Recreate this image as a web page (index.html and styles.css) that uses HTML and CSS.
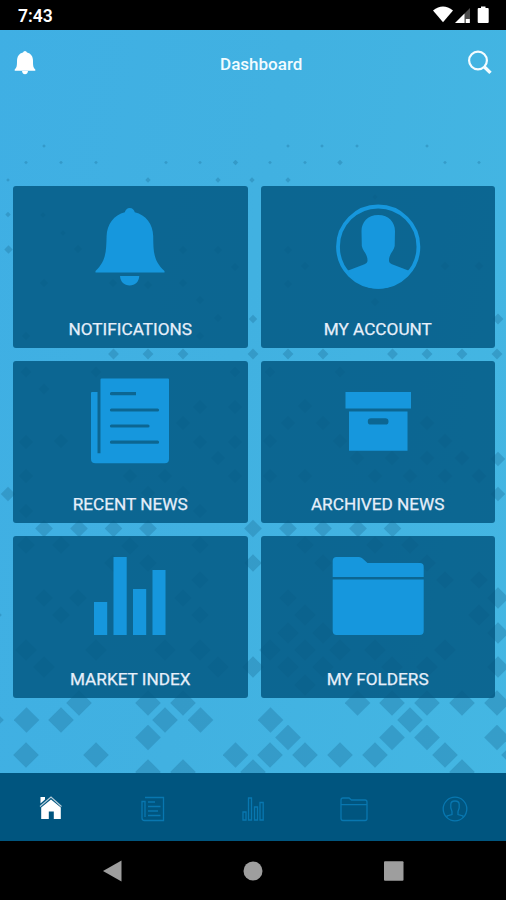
FILE: index.html
```html
<!DOCTYPE html>
<html lang="en">
<head>
<meta charset="utf-8">
<title>Dashboard</title>
<link rel="stylesheet" href="styles.css">
</head>
<body>
<div class="phone">
  <svg class="pattern" viewBox="0 0 506 900" aria-hidden="true">
    <defs>
      <marker id="d1" markerUnits="userSpaceOnUse" markerWidth="4" markerHeight="4" refX="2" refY="2"><path d="M2 .2L3.8 2 2 3.8 .2 2z"/></marker>
      <marker id="d2" markerUnits="userSpaceOnUse" markerWidth="6" markerHeight="6" refX="3" refY="3"><path d="M3 .3L5.7 3 3 5.7 .3 3z"/></marker>
      <marker id="d3" markerUnits="userSpaceOnUse" markerWidth="12" markerHeight="12" refX="6" refY="6"><path d="M6 1.8L10.2 6 6 10.2 1.8 6z"/></marker>
      <marker id="d4" markerUnits="userSpaceOnUse" markerWidth="12" markerHeight="12" refX="6" refY="6"><path d="M6 .6L11.4 6 6 11.4 .6 6z"/></marker>
      <marker id="d5" markerUnits="userSpaceOnUse" markerWidth="16" markerHeight="16" refX="8" refY="8"><path d="M8 .8L15.2 8 8 15.2 .8 8z"/></marker>
      <marker id="d6" markerUnits="userSpaceOnUse" markerWidth="20" markerHeight="20" refX="10" refY="10"><path d="M10 1.2L18.8 10 10 18.8 1.2 10z"/></marker>
      <marker id="d7" markerUnits="userSpaceOnUse" markerWidth="24" markerHeight="24" refX="12" refY="12"><path d="M12 1.2L22.8 12 12 22.8 1.2 12z"/></marker>
      <marker id="d8" markerUnits="userSpaceOnUse" markerWidth="26" markerHeight="26" refX="13" refY="13"><path d="M13 .2L25.8 13 13 25.8 .2 13z"/></marker>
    </defs>
    <polyline class="m1" points="44,146 288,146 322,146 357,146 427,146 26,162.500 61,162.500 96,162.500 166,162.500 200,162.500 270,162.500 305,162.500 445,162.500 479,162.500 8,180"/>
    <polyline class="m2" points="235.500,162.500 340,162.500 148,180 218,180 252,180 288,180 8,214.500 375,197 43,215 63,233"/>
    <polyline class="m3" points="8.500,249.500 78,249 183,250 218,250 44,283 113,283 148,285 183,283 200,300 218,318 235,267 26,336 200,336 288,250 288,284 305,266 375,302 445,266 479,266 253,319"/>
    <polyline class="m4" points="113.500,354 148,354 183,354 253,354 288,354 323,354 392.500,354 427,354 462,354 497,354 498,319 26,372 96,372 235,372 44,389 270,372 340,372"/>
    <polyline class="m5" points="8,494 200,407 235,407 183,423 200,442 235,442 218,458 26,442 61,441 26,476 130,476 165,476 235,476 148,493 183,493 26,511 200,511 305,406 288,423 323,423 427,423 340,441 270,441 445,441 357,458 392,458 427,458 462,458 270,476 305,476 375,476 410,476 445,476 479,476 498,459 498,494"/>
    <polyline class="m6" points="44,528.500 79,528.500 113.500,528.500 148,528.500 253,528.500 288,528.500 323,528.500 358,528.500 392.500,528.500 26,545 61,545 130,546 200,545 113,563 148,563 253,563 200,580 44,598 78,598 183,598 61,615 200,615 -7,615 305,545 375,545 410,545 427,563 323,563 445,580 479,580 288,598"/>
    <polyline class="m7" points="498,598 498,633 498,667 479,615 305,615 288,633 323,633 270,650 305,650 340,650 375,650 445,650 288,667 323,667 392,667 427,667 305,685 26,650 96,650 165,650 200,650 44,667 218,667 253,667"/>
    <polyline class="m8" points="-9,720 26.500,720 61,720 79,703 148,703 183,703 165,720 200.500,720 148,737.500 26,755 96,755 235.500,755 148,772 183,772 253,772 357.500,703 392,703 427,703 462,703 497,703 270.500,720 410,720 288,737.500 392,737.500 427,737.500 497,737.500 270,755 305,755 340,755 375,755 445,755 462,772 514,755"/>
  </svg>

  <header class="status">
    <span class="clock">7:43</span>
    <svg class="status-icons" width="60" height="20" viewBox="0 0 60 20">
      <path d="M0 5.500Q10-2.500 20 5.500L10 17.200z"/>
      <path d="M22 18L37 3V18z" opacity=".3"/>
      <path d="M22 18L31.500 8.500V18zM32.800 14h4v4h-4z"/>
      <path d="M48 1.500h4.500V3h2.200q1 0 1 1v13q0 1-1 1h-9q-1 0-1-1V4q0-1 1-1H48z"/>
    </svg>
  </header>

  <div class="appbar">
    <svg width="22" height="26" viewBox="0 0 22 26"><path class="white" d="M11 1q1.600 0 2 1.500C17 3.500 19 6.500 19 11c0 5 .3 6.500 2.300 8.500v1.300H.7v-1.300C2.700 17.500 3 16 3 11c0-4.500 2-7.500 6-8.500Q9.400 1 11 1zM8 21h6q-.5 3.200-3 3.200T8 21z"/></svg>
    <h1 class="title">Dashboard</h1>
    <svg width="26" height="26" viewBox="0 0 26 26"><circle cx="11" cy="10.500" r="8.900" class="lens"/><path class="handle" d="M17.200 16.700l6.300 6.200"/></svg>
  </div>

  <main class="tiles">
    <section class="tile">
      <svg class="art" viewBox="0 0 100 100"><path d="M49.800 14c2.700 0 4.200 1.700 5 4.200C66 21 73 30 73.200 42c.2 16 .3 25 11.300 35v1.500h-69V77C26 67 26.200 58 26.600 42 27 30 34 21 44.800 18.200c.8-2.500 2.300-4.200 5-4.200zM40 82h19.300c-.5 6-4.200 9.500-9.600 9.500S40.500 88 40 82z"/></svg>
      <h2 class="label">NOTIFICATIONS</h2>
    </section>
    <section class="tile">
      <svg class="art" viewBox="0 0 100 100"><circle class="ring" cx="50.200" cy="52.700" r="40.200"/><path d="M50.200 21C61 21 67 28.500 67 37l-.3 15c-.7 5-5.700 7.500-5.700 14.500 0 2 1 2.800 3 3.700l17 6.500C74.500 88 63 94.700 50.200 94.700S26 88 19.500 76.700l17-6.500c2-.9 3-1.700 3-3.700 0-7-5-9.500-5.700-14.500L33.500 37c0-8.500 6-16 16.700-16z"/></svg>
      <h2 class="label">MY ACCOUNT</h2>
    </section>
    <section class="tile">
      <svg class="art" viewBox="0 0 100 100"><path fill-rule="evenodd" d="M21.500 9.500H88q1 0 1 1V90q0 4.300-4.300 4.300H15.500Q11 94.300 11 90V24q0-1 1-1h5.500v61.300h3V10.500q0-1 1-1zM31.500 23.100a1.600 1.600 0 0 0 0 3.200H56v-3.200zM31.500 39.400a1.600 1.600 0 0 0 0 3.200H77.500a1.600 1.600 0 0 0 0-3.200zM31.500 55.400a1.600 1.600 0 0 0 0 3.200H68a1.600 1.600 0 0 0 0-3.200zM31.500 71.600a1.600 1.600 0 0 0 0 3.200H77.500a1.600 1.600 0 0 0 0-3.200z"/></svg>
      <h2 class="label">RECENT NEWS</h2>
    </section>
    <section class="tile">
      <svg class="art" viewBox="0 0 100 100"><path fill-rule="evenodd" d="M17.500 23H83v16.500H17.500zM21 42.500h58.500v39.200H21zM43 49.200a3.200 3.200 0 0 0 0 6.400h14.300a3.200 3.200 0 0 0 0-6.400z"/></svg>
      <h2 class="label">ARCHIVED NEWS</h2>
    </section>
    <section class="tile">
      <svg class="art" viewBox="0 0 100 100"><path d="M14 58h13.200v33H14zM33.500 13h13.200v78H33.500zM53 45h13.200v46H53zM72.500 26h13v65h-13z"/></svg>
      <h2 class="label">MARKET INDEX</h2>
    </section>
    <section class="tile">
      <svg class="art" viewBox="0 0 100 100"><path d="M8.500 13H31q2 0 3.500 1.500l5 4.500H92q3.700 0 3.700 3.700V33h-91V17Q4.700 13 8.500 13zM4.700 35.500h91V87q0 4-4 4H8.700q-4 0-4-4z"/></svg>
      <h2 class="label">MY FOLDERS</h2>
    </section>
  </main>

  <nav class="tabs">
    <svg viewBox="0 0 30 30"><path class="white" d="M4.500 4H9v2.500l-4.500 4zM15 6.500l9.800 8V26h-7v-7.500h-5V26H5.200V14.500z"/><path class="roof" d="M4 13.500L15 4l10.500 9.500"/></svg>
    <svg viewBox="0 0 30 30"><path class="line" d="M8 4.500h18.500v23H7.500Q5 27.500 5 25V8.500h3V24M11 9h7M11 13.500h12.500M11 18h10M11 22.500h12.500"/></svg>
    <svg viewBox="0 0 30 30"><path class="line" d="M5 19h3v8H5zM10.500 5h3v22h-3zM16.500 14h3v13h-3zM22 9.500h3.200V27H22z"/></svg>
    <svg viewBox="0 0 30 30"><path class="line" d="M2 7q0-2 2-2h6l2.500 2H26q2 0 2 2v16.500q0 2-2 2H4q-2 0-2-2zM2 11.700h26"/></svg>
    <svg viewBox="0 0 30 30"><circle class="line" cx="15" cy="16" r="11.800"/><path class="line" d="M7 24.500v-1.500l5-1.500v-3L10.800 15v-3.500Q10.800 8 15 8t4.200 3.500V15L18 18.500v3l5 1.500v1.500"/></svg>
  </nav>

  <footer class="system">
    <svg viewBox="0 0 24 24"><path d="M2 12L20.500 1.500v21z"/></svg>
    <svg viewBox="0 0 24 24"><circle cx="12" cy="12" r="9.500"/></svg>
    <svg viewBox="0 0 24 24"><rect x="2" y="2.300" width="19.500" height="19.500" rx="1"/></svg>
  </footer>
</div>
</body>
</html>
```
FILE: styles.css
```css
* { box-sizing: border-box; }

body {
  margin: 0;
  font-family: Roboto, "Liberation Sans", sans-serif;
}

.phone {
  position: relative;
  display: flex;
  flex-direction: column;
  width: 506px;
  height: 900px;
  overflow: hidden;
  background: linear-gradient(100deg, #3fafe4 0%, #41b1e1 45%, #44b7e3 100%);
}

.pattern {
  position: absolute;
  inset: 0;
  width: 506px;
  height: 900px;
}
.pattern marker path { fill: #257da9; fill-opacity: .44; }
.pattern polyline { fill: none; }
.m1 { marker: url(#d1); }
.m2 { marker: url(#d2); }
.m3 { marker: url(#d3); }
.m4 { marker: url(#d4); }
.m5 { marker: url(#d5); }
.m6 { marker: url(#d6); }
.m7 { marker: url(#d7); }
.m8 { marker: url(#d8); }

.status, .appbar, .tiles, .tabs, .system { position: relative; }

.status {
  display: flex;
  align-items: center;
  justify-content: space-between;
  height: 30px;
  padding: 2px 13px 0 18px;
  background: #000;
  color: #fff;
}
.clock { font-size: 17.5px; font-weight: 600; }
.status-icons { margin-top: -2px; fill: #fff; }

.appbar {
  display: flex;
  align-items: center;
  justify-content: space-between;
  height: 66px;
  padding: 0 12.500px 0 14px;
}
.white { fill: #fff; }
.title {
  margin: 1px 0 0 19px;
  font-size: 17px;
  font-weight: 500;
  color: #f2fcff;
}
.lens { fill: none; stroke: #f4fcff; stroke-width: 2.2; }
.handle { fill: none; stroke: #f4fcff; stroke-width: 3.4; }

.tiles {
  display: grid;
  grid-template-columns: 1fr 1fr;
  grid-auto-rows: 162px;
  gap: 13px;
  padding: 90px 11px 0 13px;
  height: 677px;
}
.tile {
  display: flex;
  flex-direction: column;
  align-items: center;
  padding-top: 8px;
  border-radius: 3px;
  background: rgba(5, 91, 133, .87);
}
.art {
  width: 100px;
  height: 100px;
  fill: #1697dd;
}
.ring { fill: none; stroke: #1697dd; stroke-width: 3.8; }
.label {
  margin: 25px 0 0;
  font-size: 17.200px;
  line-height: 20px;
  font-weight: 400;
  color: #e6effa;
  -webkit-text-stroke: .25px #e6effa;
  white-space: nowrap;
}

.tabs {
  display: grid;
  grid-template-columns: repeat(5, 1fr);
  place-items: center;
  height: 68px;
  padding-top: 2px;
  background: #00557f;
}
.tabs svg { width: 30px; height: 30px; }
.line { fill: none; stroke: #0877b0; stroke-width: 1.3; }
.roof { fill: none; stroke: #b5ccd8; stroke-width: 1.2; }

.system {
  display: flex;
  justify-content: center;
  gap: 116.500px;
  height: 59px;
  padding-top: 18px;
  background: #000;
}
.system svg { width: 24px; height: 24px; fill: #9e9e9e; }
```
